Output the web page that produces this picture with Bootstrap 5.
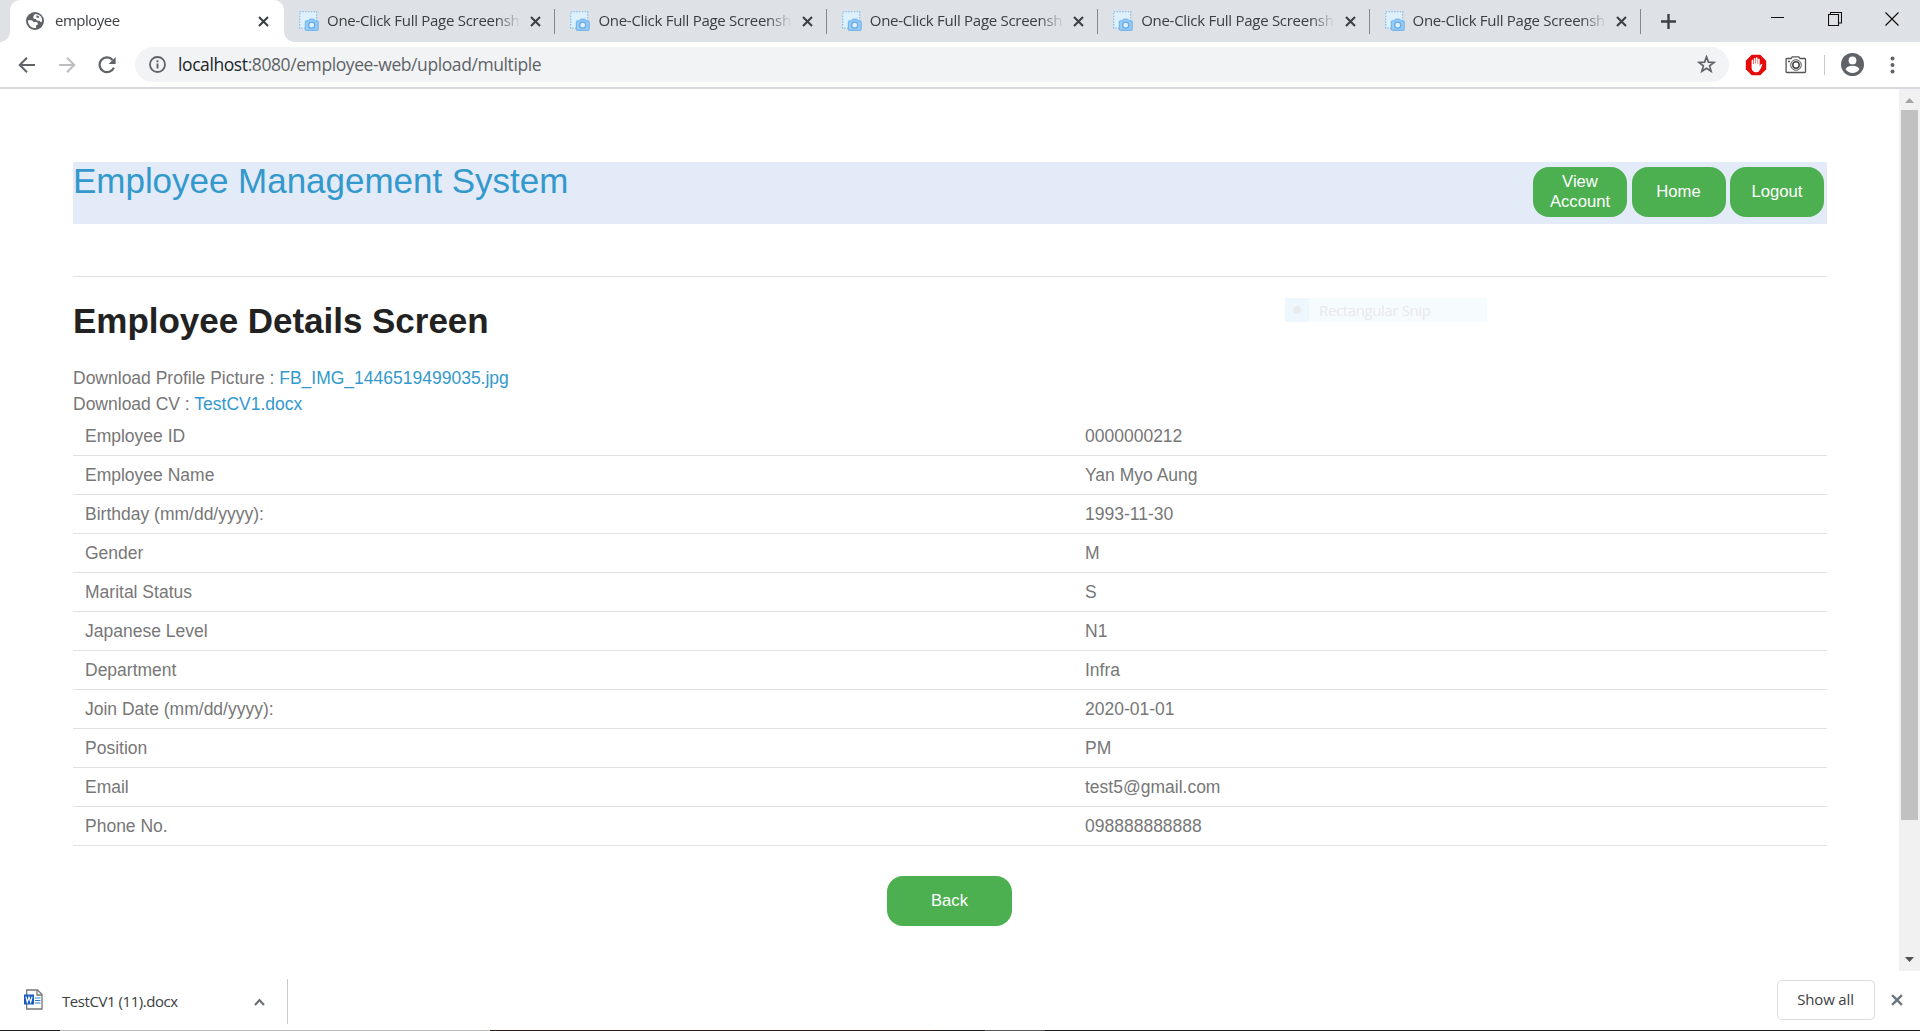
<!DOCTYPE html>
<html lang="en">
<head>
<meta charset="utf-8">
<meta name="viewport" content="width=device-width, initial-scale=1">
<title>employee</title>
<link rel="stylesheet" href="https://cdn.jsdelivr.net/npm/bootstrap@5.3.0/dist/css/bootstrap.min.css">
<style>
html,body{height:1031px;overflow:hidden}
body{font-family:"Liberation Sans",Arial,sans-serif;font-size:17.5px;line-height:26px;color:#777;background:#fff}
svg{display:block;flex:none}
.ui-font{font-family:"Open Sans","Noto Sans",sans-serif}

/* tab strip */
.tab-strip{height:42px;background:#dee1e6;padding-left:10px}
.browser-tab{width:270.4px;height:42px;padding:0 13px 0 15px;font-size:15px;color:#3c4043;position:relative}
.tab-title{width:194px;margin:-2px 0 0 8px;white-space:nowrap;letter-spacing:-.28px;-webkit-mask-image:linear-gradient(90deg,#000 87%,transparent);mask-image:linear-gradient(90deg,#000 87%,transparent)}
.tab-active{width:274px;background:#fff;border-radius:10px 10px 0 0;padding:0 15px 0 16px}
.tab-active .tab-title{letter-spacing:-.5px;margin-left:11px}
.tab-active::before,.tab-active::after{content:"";position:absolute;bottom:0;width:10px;height:10px}
.tab-active::before{left:-10px;background:radial-gradient(circle at 0 0,#dee1e6 9.5px,#fff 10px)}
.tab-active::after{right:-10px;background:radial-gradient(circle at 100% 0,#dee1e6 9.5px,#fff 10px)}
.tab-rule{width:1px;height:25px;background:#84878b}
.tab-plus{margin-left:20px}
.window-controls{gap:43px;padding:0 21px 5px 0;color:#111}

/* toolbar */
.toolbar{height:47px;border-bottom:2px solid #d7d9de;background:#fff;color:#5f6368;padding:0 0 0 18px}
.nav-icons{gap:22px;width:117px}
.omnibox{height:35px;border-radius:18px;background:#f1f3f4;width:1594px;font-size:17.5px;padding:0 13px 0 14px}
.address{letter-spacing:-.41px;margin-top:-1px}
.camera-icon{margin-left:17px}
.toolbar-rule{width:1px;height:20px;background:#c8cacd;margin:0 16px 0 17px}

/* page */
.page-view{height:882px}
.page-body{padding:73px 72px 0 73px;width:1899px}
.title-bar{height:62px;background:#e4ebf8;padding-right:3px}
.title-bar h1{font-size:35px;line-height:38px;letter-spacing:-.03px;color:#39c;font-weight:400}
.title-actions{gap:4.5px;padding-top:5px}
.pill-btn,.pill-btn:hover{background:#4caf50;color:#fff}
.pill-btn{border:0;border-radius:16px;height:50px;width:94px;font-size:16.67px;line-height:20px;padding:0}
.pill-wide{width:125px;margin-right:1px}
.rule-top{height:1px;margin:52px 0 0;background:#e1e1e1}
.page-heading{font-size:35px;line-height:42px;letter-spacing:-.03px;color:#222;font-weight:700;margin:23px 0}
.page-body a{color:#39c;text-decoration:none}
.detail-table{table-layout:fixed;margin:0 0 30px;border-collapse:separate;border-spacing:0}
.detail-table td{padding:6px 12px;color:#777;border-bottom:1px solid #e1e1e1;line-height:26px}
.label-col{width:1000px}
.scroll-rail{width:21px;background:#f1f1f1;padding:9px 0}
.scroll-thumb{height:710px;width:17px;background:#c1c1c1;margin-top:7px}
.snip-ghost{position:absolute;left:1285px;top:298px;width:202px;height:24px;background:#f6fbfe;color:#e9e9e9;font-size:15px;letter-spacing:-.38px}
.ghost-dot{width:24px;height:24px;margin-right:10px;background:#eff7fe}
.ghost-dot i{width:8px;height:8px;border-radius:50%;background:#e9ebed}

/* download shelf */
.shelf{height:59px;font-size:15px;color:#3c4043;background:#fff}
.shelf-item{width:288px;height:45px;margin-top:8px;border-right:1px solid #ccc;padding:0 22px 0 24px}
.file-name{letter-spacing:-.44px;margin:-1px 0 0 19px}
.shelf-end{gap:16px;padding-right:17px;padding-bottom:1px}
.show-all{width:98px;height:40px;border:1px solid #dadce0;border-radius:5px;font-size:15px;letter-spacing:-.15px;color:#3c4043;padding:0 1px 2px 0}
.desk-edge{height:1px;background:linear-gradient(90deg,#1c1c1c 60px,#bbb 60px 490px,#2c1b18 490px 930px,#1b1b1b 940px 985px,#555 985px 1045px,#1b1b1b 1045px)}
</style>
</head>
<body class="d-flex flex-column">
<svg width="0" height="0" class="position-absolute"><defs>
<symbol id="shot" viewBox="0 0 20 20"><rect x=".7" y=".7" width="17" height="16.500" fill="#dff0fd"/><rect x=".7" y=".7" width="17" height="16.500" fill="none" stroke="#85bfe9" stroke-width="1.300" stroke-dasharray="1.400 1.400"/><path d="M7.200 9.800h2.300l1-1.700h4.400l1 1.700h2.400q.9 0 .9.9v7.800q0 .9-.9.9H7.200q-.9 0-.9-.9v-7.800q0-.9.9-.9Z" fill="#93cbf9" stroke="#68ace6" stroke-width=".9"/><circle cx="12.700" cy="14.200" r="3" fill="#dff1ff" stroke="#64a7e3" stroke-width="1.200"/></symbol>
<symbol id="cross" viewBox="0 0 11 11"><path d="M1 1 10 10M10 1 1 10" stroke="currentColor" stroke-width="2.100"/></symbol>
</defs></svg>

<header class="ui-font">
 <div class="tab-strip d-flex align-items-center">
  <div class="browser-tab tab-active d-flex align-items-center">
   <svg width="18" height="18" viewBox="0 0 18 18"><circle cx="9" cy="9" r="9" fill="#5f6368"/><path d="M1.900 8.300h3.300q1.800.1 2.300 1.700h2.700q1.800.2 1.700 1.900-.1 1.300-1.800 1.300v2.600Q6.800 16.700 4 14 1.600 11.500 1.900 8.300ZM9 1.900q-1.300 1.400-1.800 3.200-.3 1.800 1.300 1.800h1.400q.2 1.700 1.900 1.800h1.500q.7 1.200 2.700 1.300Q16.600 6 13.900 3.600 11.800 1.800 9 1.900Z" fill="#fff"/><path d="m10.500 3.300 2.600.9-.5 1.700-2.300-.3Z" fill="#5f6368"/></svg>
   <span class="tab-title">employee</span>
   <svg class="ms-auto" width="11" height="11"><use href="#cross"/></svg>
  </div>
  <div class="browser-tab d-flex align-items-center"><svg width="20" height="20"><use href="#shot"/></svg><span class="tab-title">One-Click Full Page Screensh</span><svg class="ms-auto" width="11" height="11"><use href="#cross"/></svg></div><div class="tab-rule"></div>
  <div class="browser-tab d-flex align-items-center"><svg width="20" height="20"><use href="#shot"/></svg><span class="tab-title">One-Click Full Page Screensh</span><svg class="ms-auto" width="11" height="11"><use href="#cross"/></svg></div><div class="tab-rule"></div>
  <div class="browser-tab d-flex align-items-center"><svg width="20" height="20"><use href="#shot"/></svg><span class="tab-title">One-Click Full Page Screensh</span><svg class="ms-auto" width="11" height="11"><use href="#cross"/></svg></div><div class="tab-rule"></div>
  <div class="browser-tab d-flex align-items-center"><svg width="20" height="20"><use href="#shot"/></svg><span class="tab-title">One-Click Full Page Screensh</span><svg class="ms-auto" width="11" height="11"><use href="#cross"/></svg></div><div class="tab-rule"></div>
  <div class="browser-tab d-flex align-items-center"><svg width="20" height="20"><use href="#shot"/></svg><span class="tab-title">One-Click Full Page Screensh</span><svg class="ms-auto" width="11" height="11"><use href="#cross"/></svg></div><div class="tab-rule"></div>
  <svg class="tab-plus" width="15" height="15" viewBox="0 0 15 15"><path d="M7.500 0v15M0 7.500h15" stroke="#3c4043" stroke-width="2.400"/></svg>
  <div class="window-controls d-flex align-items-center ms-auto">
   <svg width="14" height="14" viewBox="0 0 14 14"><path d="M0 5.500h13" stroke="currentColor"/></svg>
   <svg width="14" height="14" viewBox="0 0 14 14"><path d="M.5 2.500h10v11H.5ZM2.500 2.500v-2h11v10.500h-3" fill="none" stroke="currentColor" stroke-width="1.100"/></svg>
   <svg width="14" height="14" viewBox="0 0 14 14"><path d="m.5.5 13 13m0-13-13 13" stroke="currentColor" stroke-width="1.200"/></svg>
  </div>
 </div>

 <div class="toolbar d-flex align-items-center">
  <div class="nav-icons d-flex align-items-center">
   <svg width="18" height="18" viewBox="0 0 18 18"><path d="M17 9H2M9 1.700 1.700 9 9 16.300" fill="none" stroke="#5f6368" stroke-width="2"/></svg>
   <svg width="18" height="18" viewBox="0 0 18 18"><path d="M1 9h15M9 1.700 16.300 9 9 16.300" fill="none" stroke="#bcbec1" stroke-width="2"/></svg>
   <svg width="18" height="18" viewBox="0 0 18 18"><path d="M15.900 11.600A7.400 7.400 0 1 1 14.600 3.900" fill="none" stroke="#5f6368" stroke-width="2.200"/><path d="M17.600 1v7h-7Z" fill="#5f6368"/></svg>
  </div>
  <div class="omnibox d-flex align-items-center">
   <svg width="17" height="17" viewBox="0 0 17 17"><circle cx="8.500" cy="8.500" r="7.500" fill="none" stroke="#5f6368" stroke-width="1.800"/><path d="M8.500 7.400v5M8.500 4.300v1.900" stroke="#5f6368" stroke-width="1.900"/></svg>
   <span class="address ms-2 ps-1"><span class="text-dark">localhost</span>:8080/employee-web/upload/multiple</span>
   <svg class="ms-auto" width="19" height="19" viewBox="0 0 19 19"><path d="m9.500 1.900 1.900 5.200 5.600.3-4.400 3.500 1.500 5.400-4.600-3.100-4.600 3.100 1.500-5.400L2 7.400l5.600-.3Z" fill="none" stroke="#5f6368" stroke-width="1.700"/></svg>
  </div>
  <svg class="ms-3" width="22" height="22" viewBox="0 0 22 22"><path d="M6.700.8h8.600l5.900 5.900v8.600l-5.900 5.900H6.700L.8 15.300V6.700Z" fill="#e60b0b"/><path d="M6.600 11V6.200q.9-1.300 1.600 0V10h.6V4.400q.8-1.300 1.600 0V9.600h.5V3.800q.8-1.300 1.700 0V9.800h.5V5q.8-1.200 1.600 0v7l1.200-1.800q1.200-.6 1.500.3l-2.200 5q-1.200 2.700-4 2.700-4.400 0-4.600-4.400Z" fill="#fff"/></svg>
  <svg class="camera-icon" width="23" height="18" viewBox="0 0 23 18"><path d="M2.500 2.500H7L8.300.9h6.400L16 2.500h4.800q.7 0 .7.700v12.600q0 .7-.7.700h-18q-.7 0-.7-.7V3.200q0-.7.4-.7Z" fill="#fff" stroke="#555" stroke-width="1.300"/><circle cx="12" cy="9" r="5.300" fill="none" stroke="#555"/><circle cx="12" cy="9" r="3.200" fill="none" stroke="#444" stroke-width="1.500"/><path d="M4 5.500h2" stroke="#555" stroke-width="1.300"/></svg>
  <div class="toolbar-rule"></div>
  <svg width="23" height="23" viewBox="0 0 23 23"><circle cx="11.500" cy="11.500" r="11.500" fill="#5f6368"/><circle cx="11.500" cy="7.400" r="3.900" fill="#fff"/><path d="M4.600 16.200q1.400-3.500 6.900-3.500t6.900 3.500q-2.600 3.800-6.900 3.800t-6.900-3.800Z" fill="#fff"/></svg>
  <svg width="6" height="18" viewBox="0 0 6 18" class="ms-auto me-4"><g fill="#5f6368"><circle cx="2.500" cy="2.500" r="2"/><circle cx="2.500" cy="9" r="2"/><circle cx="2.500" cy="15.500" r="2"/></g></svg>
 </div>
</header>

<div class="page-view d-flex">
 <main class="page-body">
  <div class="title-bar d-flex justify-content-between">
   <h1 class="m-0">Employee Management System</h1>
   <div class="title-actions d-flex">
    <button class="btn pill-btn" type="button">View<br>Account</button>
    <button class="btn pill-btn" type="button">Home</button>
    <button class="btn pill-btn" type="button">Logout</button>
   </div>
  </div>
  <div class="rule-top"></div>
  <h2 class="page-heading">Employee Details Screen</h2>
  <div>Download Profile Picture : <a href="#">FB_IMG_1446519499035.jpg</a></div>
  <div>Download CV : <a href="#">TestCV1.docx</a></div>
  <table class="table detail-table">
   <colgroup><col class="label-col"><col></colgroup>
   <tbody>
    <tr><td>Employee ID</td><td>0000000212</td></tr>
    <tr><td>Employee Name</td><td>Yan Myo Aung</td></tr>
    <tr><td>Birthday (mm/dd/yyyy):</td><td>1993-11-30</td></tr>
    <tr><td>Gender</td><td>M</td></tr>
    <tr><td>Marital Status</td><td>S</td></tr>
    <tr><td>Japanese Level</td><td>N1</td></tr>
    <tr><td>Department</td><td>Infra</td></tr>
    <tr><td>Join Date (mm/dd/yyyy):</td><td>2020-01-01</td></tr>
    <tr><td>Position</td><td>PM</td></tr>
    <tr><td>Email</td><td>test5@gmail.com</td></tr>
    <tr><td>Phone No.</td><td>098888888888</td></tr>
   </tbody>
  </table>
  <div class="d-flex justify-content-center"><button class="btn pill-btn pill-wide" type="button">Back</button></div>
 </main>
 <div class="scroll-rail d-flex flex-column align-items-center">
  <svg width="9" height="5" viewBox="0 0 9 5"><path d="M0 5 4.500 0 9 5Z" fill="#a3a3a3"/></svg>
  <div class="scroll-thumb"></div>
  <svg class="mt-auto" width="9" height="5" viewBox="0 0 9 5"><path d="M0 0h9L4.500 5Z" fill="#505050"/></svg>
 </div>
</div>
<div class="snip-ghost ui-font d-flex align-items-center"><span class="ghost-dot d-flex align-items-center justify-content-center"><i></i></span>Rectangular Snip</div>

<footer class="ui-font">
 <div class="shelf d-flex">
  <div class="shelf-item d-flex align-items-center">
   <svg class="mb-1" width="19" height="21" viewBox="0 0 19 21"><path d="M2.700 1h10.800L18 5.500V20H2.700Z" fill="#fff" stroke="#777" stroke-width="1.300"/><path d="M13 1v5h5" fill="none" stroke="#777" stroke-width="1.300"/><path d="M11 9h5.500" stroke="#41a5ee" stroke-width="1.200"/><path d="M11 11.500h5.500M11 14h5.500" stroke="#2b7cd3" stroke-width="1.200"/><path d="M0 5.500h10v10H0Z" fill="#185abd"/><path d="m1.900 7.700 1.400 5.400 1.700-5 1.700 5 1.400-5.400" fill="none" stroke="#fff" stroke-width="1.200"/></svg>
   <span class="file-name">TestCV1 (11).docx</span>
   <svg class="ms-auto" width="11" height="8" viewBox="0 0 11 8"><path d="m1 7 4.500-5L10 7" fill="none" stroke="#6b6e72" stroke-width="2.100"/></svg>
  </div>
  <div class="shelf-end d-flex align-items-center ms-auto">
   <button class="btn show-all" type="button">Show all</button>
   <svg width="12" height="12" class="text-secondary"><use href="#cross"/></svg>
  </div>
 </div>
 <div class="desk-edge"></div>
</footer>
<script src="https://cdn.jsdelivr.net/npm/bootstrap@5.3.0/dist/js/bootstrap.bundle.min.js"></script>
</body>
</html>
